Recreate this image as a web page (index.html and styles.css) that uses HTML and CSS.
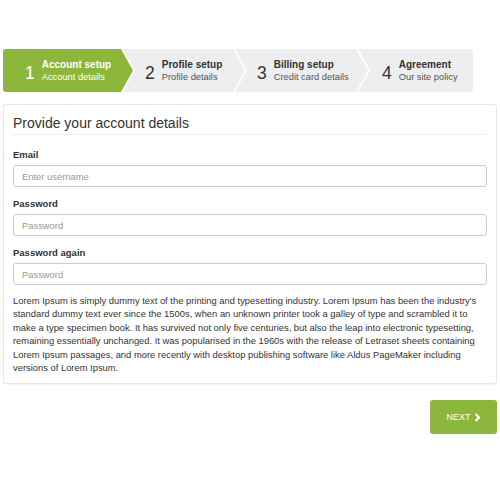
FILE: index.html
```html
<!DOCTYPE html>
<html>
<head>
<meta charset="utf-8">
<link rel="stylesheet" href="styles.css">
</head>
<body>
<div class="page">
  <nav class="steps">
    <div class="step step-first current">
      <span class="num">1</span>
      <span class="txt"><span class="title">Account setup</span><span class="sub">Account details</span></span>
    </div>
    <div class="step step-2">
      <span class="num">2</span>
      <span class="txt"><span class="title">Profile setup</span><span class="sub">Profile details</span></span>
    </div>
    <div class="step step-3">
      <span class="num">3</span>
      <span class="txt"><span class="title">Billing setup</span><span class="sub">Credit card details</span></span>
    </div>
    <div class="step step-last">
      <span class="num">4</span>
      <span class="txt"><span class="title">Agreement</span><span class="sub">Our site policy</span></span>
    </div>
  </nav>

  <section class="card">
    <h3 class="card-title">Provide your account details</h3>
    <div class="field">
      <label class="label">Email</label>
      <input class="input" type="text" placeholder="Enter username">
    </div>
    <div class="field">
      <label class="label">Password</label>
      <input class="input" type="password" placeholder="Password">
    </div>
    <div class="field">
      <label class="label">Password again</label>
      <input class="input" type="password" placeholder="Password">
    </div>
    <p class="text">Lorem Ipsum is simply dummy text of the printing and typesetting industry. Lorem Ipsum has been the industry's standard dummy text ever since the 1500s, when an unknown printer took a galley of type and scrambled it to make a type specimen book. It has survived not only five centuries, but also the leap into electronic typesetting, remaining essentially unchanged. It was popularised in the 1960s with the release of Letraset sheets containing Lorem Ipsum passages, and more recently with desktop publishing software like Aldus PageMaker including versions of Lorem Ipsum.</p>
  </section>

  <div class="actions">
    <button class="btn-next">NEXT <svg class="chev" width="7" height="9" viewBox="0 0 7 9"><path d="M1.5 1 L5 4.5 L1.5 8" fill="none" stroke="#fff" stroke-width="2.2"/></svg></button>
  </div>
</div>
</body>
</html>
```

FILE: styles.css
```css
html, body {
  margin: 0;
  padding: 0;
  background: #fff;
}

body {
  font-family: "Liberation Sans", Arial, sans-serif;
  color: #333;
}

.page {
  padding: 49px 3px 0;
}

/* Steps */
.steps {
  display: flex;
  height: 43px;
}

.step {
  display: flex;
  align-items: center;
  gap: 7px;
  height: 43px;
  padding-left: 22px;
  box-sizing: border-box;
  background: #eceef0;
  color: #333;
  flex: none;
  margin-left: -10px;
  clip-path: polygon(0 0, calc(100% - 12px) 0, 100% 50%, calc(100% - 12px) 100%, 0 100%, 12px 50%);
}

.step-first {
  width: 130px;
  margin-left: 0;
  border-radius: 3px 0 0 3px;
  clip-path: polygon(0 0, calc(100% - 12px) 0, 100% 50%, calc(100% - 12px) 100%, 0 100%);
}

.step-2 { width: 122px; }
.step-3 { width: 133px; }

.step-last {
  width: 115px;
  padding-left: 24px;
  border-radius: 0 3px 3px 0;
  clip-path: polygon(0 0, 100% 0, 100% 100%, 0 100%, 12px 50%);
}

.step.current {
  background: #8cb63c;
  color: #fff;
}

.num {
  font-size: 17.5px;
  line-height: 17px;
  margin-top: 6px;
}

.txt {
  display: flex;
  flex-direction: column;
}

.title {
  font-size: 10px;
  font-weight: bold;
  line-height: 13px;
}

.sub {
  font-size: 9.3px;
  line-height: 13px;
  color: #555;
}

.current .sub {
  color: #fff;
}

/* Card */
.card {
  margin-top: 12px;
  border: 1px solid #e6e6e6;
  border-radius: 3px;
  padding: 10px 9px 9px;
  box-shadow: 0 1px 1px rgba(0, 0, 0, 0.04);
}

.card-title {
  margin: 0 0 14px;
  padding-bottom: 3px;
  border-bottom: 1px solid #eee;
  font-size: 14px;
  line-height: 16px;
  font-weight: normal;
  color: #333;
}

.field {
  display: flex;
  flex-direction: column;
  gap: 4px;
  margin-bottom: 11px;
}

.label {
  font-size: 9.5px;
  line-height: 12px;
  font-weight: bold;
  color: #333;
}

.input {
  height: 22px;
  box-sizing: border-box;
  border: 1px solid #ccc;
  border-radius: 3px;
  padding: 0 8px;
  font-family: "Liberation Sans", Arial, sans-serif;
  font-size: 9.4px;
  color: #555;
  outline: none;
  margin: 0;
}

.input::placeholder {
  color: #999;
}

.text {
  margin: -2px 0 0;
  font-size: 9.4px;
  line-height: 13.4px;
  color: #333;
}

/* Actions */
.actions {
  display: flex;
  justify-content: flex-end;
  margin-top: 16px;
}

.btn-next {
  width: 67px;
  height: 34px;
  border: none;
  border-radius: 3px;
  background: #8cb63c;
  color: #fff;
  font-family: "Liberation Sans", Arial, sans-serif;
  font-size: 9px;
  display: flex;
  align-items: center;
  justify-content: center;
  gap: 3px;
  padding: 0;
}

.chev {
  display: block;
}
```
